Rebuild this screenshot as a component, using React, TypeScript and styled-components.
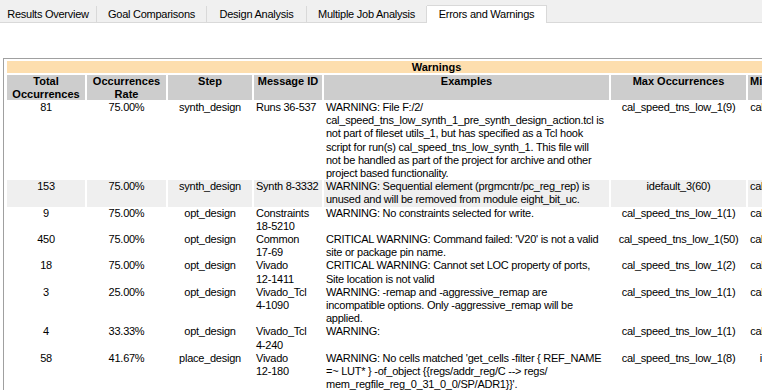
import React from 'react'
import styled, { createGlobalStyle } from 'styled-components'

const FONT = `'Liberation Sans', Arial, sans-serif`

const GlobalStyle = createGlobalStyle`
  html, body {
    margin: 0;
    padding: 0;
    background: #ffffff;
    overflow: hidden;
  }
  body {
    font-family: ${FONT};
    font-size: 11px;
    color: #000000;
  }
`

const Page = styled.div`
  width: 762px;
  height: 390px;
  overflow: hidden;
  background: #ffffff;
`

const TabBar = styled.div`
  display: flex;
  align-items: flex-end;
  height: 22px;
  background: #f0f0f0;
  border-bottom: 1px solid #d9d9d9;
`

const Tab = styled.div<{ $w: number; $active?: boolean }>`
  box-sizing: border-box;
  width: ${(p) => p.$w}px;
  height: ${(p) => (p.$active ? 18 : 16)}px;
  margin-bottom: ${(p) => (p.$active ? -1 : 0)}px;
  display: flex;
  align-items: center;
  justify-content: center;
  background: ${(p) => (p.$active ? '#ffffff' : '#f0f0f0')};
  border-right: 1px solid #d9d9d9;
  border-top: ${(p) => (p.$active ? '1px solid #d9d9d9' : 'none')};
  font-size: 11px;
  letter-spacing: -0.25px;
  padding-bottom: ${(p) => (p.$active ? 2 : 0)}px;
  white-space: nowrap;
`

const Content = styled.div`
  padding: 35px 0 0 3px;
`

const Frame = styled.div`
  width: 1000px;
  height: 400px;
  border: 1px solid #a0a0a0;
  border-right: none;
  padding: 2px 0 0 1px;
`

const Table = styled.table<{ $w: number }>`
  width: ${(p) => p.$w}px;
  border-collapse: separate;
  border-spacing: 2px 0;
  table-layout: fixed;
  font-family: ${FONT};
`

const Title = styled.th`
  background: #fddeae;
  background-clip: padding-box;
  border-bottom: 2px solid #ffffff;
  font-weight: 700;
  font-size: 11px;
  line-height: 12px;
  padding: 0;
  text-align: center;
`

const HeadCell = styled.th<{ $align: 'left' | 'center' }>`
  background: #cdcdcd;
  background-clip: padding-box;
  border-bottom: 1px solid #ffffff;
  font-weight: 700;
  font-size: 11px;
  line-height: 12.5px;
  padding: 0 2px;
  text-align: ${(p) => p.$align};
  vertical-align: top;
  white-space: pre;
  overflow: hidden;
`

const Cell = styled.td<{ $align: 'left' | 'center'; $hl?: boolean }>`
  background: ${(p) => (p.$hl ? '#efefef' : 'transparent')};
  font-size: 11px;
  letter-spacing: -0.25px;
  line-height: 13.2px;
  padding: 0 2px;
  text-align: ${(p) => p.$align};
  vertical-align: top;
  white-space: pre;
  overflow: hidden;
`

type Align = 'left' | 'center'

type Row = {
  total: string
  rate: string
  step: string
  id: string
  example: string
  max: string
  min: string
}

const TABS = [
  { label: 'Results Overview', w: 97 },
  { label: 'Goal Comparisons', w: 110 },
  { label: 'Design Analysis', w: 100 },
  { label: 'Multiple Job Analysis', w: 120 },
  { label: 'Errors and Warnings', w: 120, active: true },
]

const COLUMNS: { head: string; w: number; align: Align; headAlign: Align }[] = [
  { head: 'Total\nOccurrences', w: 78, align: 'center', headAlign: 'center' },
  { head: 'Occurrences\nRate', w: 79, align: 'center', headAlign: 'center' },
  { head: 'Step', w: 84, align: 'center', headAlign: 'center' },
  { head: 'Message ID', w: 68, align: 'left', headAlign: 'center' },
  { head: 'Examples', w: 285, align: 'left', headAlign: 'center' },
  { head: 'Max Occurrences', w: 135, align: 'center', headAlign: 'center' },
  { head: 'Min Occurrences', w: 118, align: 'center', headAlign: 'left' },
]

const TABLE_WIDTH = COLUMNS.reduce((s, c) => s + c.w, 0) + (COLUMNS.length + 1) * 2

const ROWS: Row[] = [
  {
    total: '81',
    rate: '75.00%',
    step: 'synth_design',
    id: 'Runs 36-537',
    example: [
      'WARNING: File F:/2/',
      'cal_speed_tns_low_synth_1_pre_synth_design_action.tcl is',
      'not part of fileset utils_1, but has specified as a Tcl hook',
      'script for run(s) cal_speed_tns_low_synth_1. This file will',
      'not be handled as part of the project for archive and other',
      'project based functionality.',
    ].join('\n'),
    max: 'cal_speed_tns_low_1(9)',
    min: 'cal_speed_tns_low_1(9)',
  },
  {
    total: '153',
    rate: '75.00%',
    step: 'synth_design',
    id: 'Synth 8-3332',
    example: [
      'WARNING: Sequential element (prgmcntr/pc_reg_rep) is',
      'unused and will be removed from module eight_bit_uc.',
    ].join('\n'),
    max: 'idefault_3(60)',
    min: 'cal_speed_tns_low_1(60)',
  },
  {
    total: '9',
    rate: '75.00%',
    step: 'opt_design',
    id: 'Constraints\n18-5210',
    example: 'WARNING: No constraints selected for write.',
    max: 'cal_speed_tns_low_1(1)',
    min: 'cal_speed_tns_low_1(1)',
  },
  {
    total: '450',
    rate: '75.00%',
    step: 'opt_design',
    id: 'Common\n17-69',
    example: "CRITICAL WARNING: Command failed: 'V20' is not a valid\nsite or package pin name.",
    max: 'cal_speed_tns_low_1(50)',
    min: 'cal_speed_tns_low_1(50)',
  },
  {
    total: '18',
    rate: '75.00%',
    step: 'opt_design',
    id: 'Vivado\n12-1411',
    example: 'CRITICAL WARNING: Cannot set LOC property of ports,\nSite location is not valid',
    max: 'cal_speed_tns_low_1(2)',
    min: 'cal_speed_tns_low_1(2)',
  },
  {
    total: '3',
    rate: '25.00%',
    step: 'opt_design',
    id: 'Vivado_Tcl\n4-1090',
    example: [
      'WARNING: -remap and -aggressive_remap are',
      'incompatible options. Only -aggressive_remap will be',
      'applied.',
    ].join('\n'),
    max: 'cal_speed_tns_low_1(1)',
    min: 'cal_speed_tns_low_1(1)',
  },
  {
    total: '4',
    rate: '33.33%',
    step: 'opt_design',
    id: 'Vivado_Tcl\n4-240',
    example: 'WARNING:',
    max: 'cal_speed_tns_low_1(1)',
    min: 'cal_speed_tns_low_1(1)',
  },
  {
    total: '58',
    rate: '41.67%',
    step: 'place_design',
    id: 'Vivado\n12-180',
    example: [
      "WARNING: No cells matched 'get_cells -filter { REF_NAME",
      '=~ LUT* } -of_object {{regs/addr_reg/C --> regs/',
      "mem_regfile_reg_0_31_0_0/SP/ADR1}}'.",
    ].join('\n'),
    max: 'cal_speed_tns_low_1(8)',
    min: 'idefault_3_impl_1(8)',
  },
]

export default function App() {
  return (
    <Page>
      <GlobalStyle />
      <TabBar>
        {TABS.map((t) => (
          <Tab key={t.label} $w={t.w} $active={t.active}>
            {t.label}
          </Tab>
        ))}
      </TabBar>
      <Content>
        <Frame>
          <Table $w={TABLE_WIDTH}>
            <colgroup>
              {COLUMNS.map((c) => (
                <col key={c.head} style={{ width: c.w + 'px' }} />
              ))}
            </colgroup>
            <thead>
              <tr>
                <Title colSpan={COLUMNS.length}>Warnings</Title>
              </tr>
              <tr>
                {COLUMNS.map((c) => (
                  <HeadCell key={c.head} $align={c.headAlign}>
                    {c.head}
                  </HeadCell>
                ))}
              </tr>
            </thead>
            <tbody>
              {ROWS.map((r, i) => {
                const values = [r.total, r.rate, r.step, r.id, r.example, r.max, r.min]
                return (
                  <tr key={r.total + r.id}>
                    {values.map((v, j) => (
                      <Cell key={j} $align={COLUMNS[j].align} $hl={i === 1}>
                        {v}
                      </Cell>
                    ))}
                  </tr>
                )
              })}
            </tbody>
          </Table>
        </Frame>
      </Content>
    </Page>
  )
}
